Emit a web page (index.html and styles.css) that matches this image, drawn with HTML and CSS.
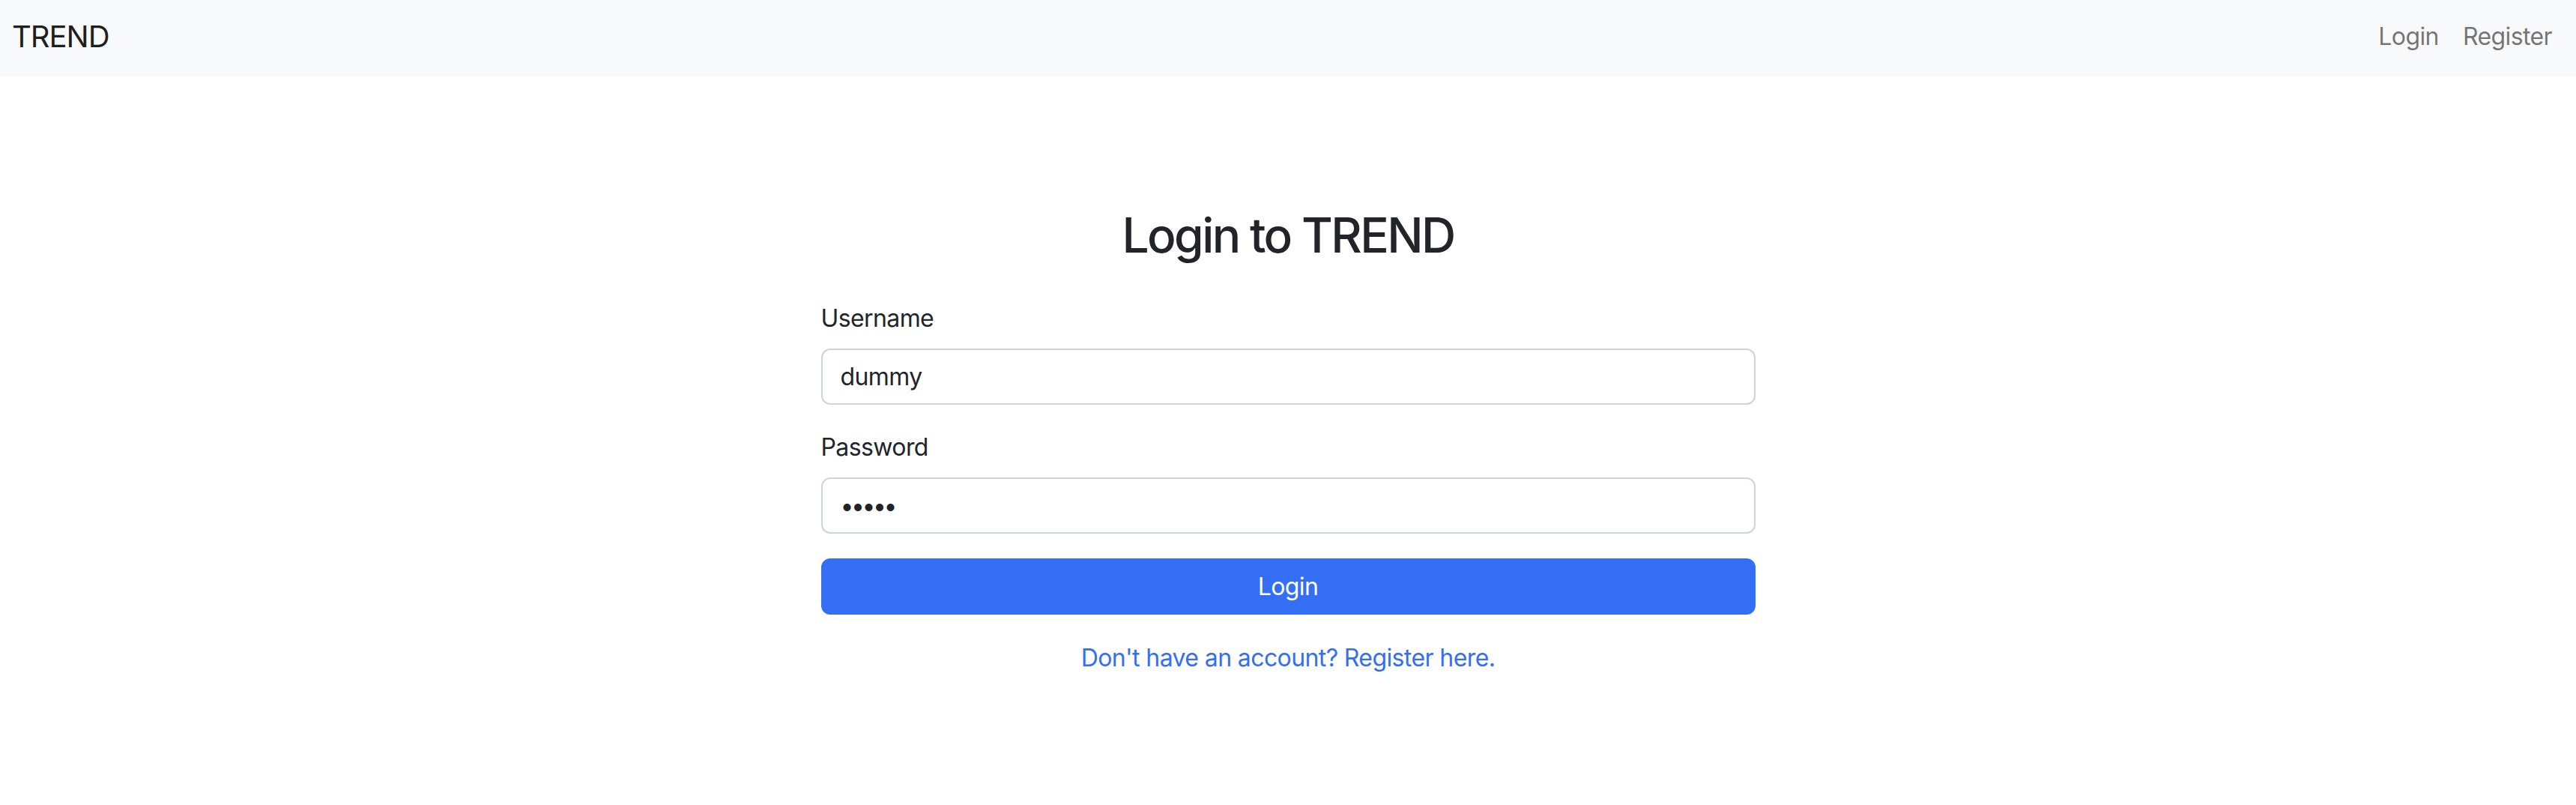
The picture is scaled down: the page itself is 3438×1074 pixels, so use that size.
FILE: index.html
```html
<!DOCTYPE html>
<html lang="en">
<head>
<meta charset="utf-8">
<title>Login - TREND</title>
<link rel="stylesheet" href="styles.css">
</head>
<body>
<nav class="navbar">
  <a class="brand" href="#">TREND</a>
  <div class="nav-links">
    <a class="nav-link" href="#">Login</a>
    <a class="nav-link" href="#">Register</a>
  </div>
</nav>
<main class="container">
  <h2 class="title">Login to TREND</h2>
  <form class="login-form">
    <div class="field">
      <label class="label" for="username">Username</label>
      <input class="input" id="username" type="text" value="dummy">
    </div>
    <div class="field">
      <label class="label" for="password">Password</label>
      <input class="input input-password" id="password" type="password" value="dummy">
    </div>
    <button class="btn-primary" type="button">Login</button>
  </form>
  <p class="alt"><a class="alt-link" href="#">Don't have an account? Register here.</a></p>
</main>
</body>
</html>
```
FILE: styles.css
```css
* { box-sizing: border-box; }
html, body { margin: 0; padding: 0; }
body {
  font-family: Inter, "Noto Sans", "Liberation Sans", sans-serif;
  font-size: 32px;
  line-height: 1.5;
  letter-spacing: -0.6px;
  color: #212529;
  background: #ffffff;
}
a { text-decoration: none; }

.navbar {
  height: 103px;
  background: #f8f9fa;
  display: flex;
  align-items: center;
  justify-content: space-between;
  padding: 0 16px 6px 16px;
}
.brand {
  font-size: 40px;
  line-height: 60px;
  letter-spacing: -1px;
  color: rgba(0, 0, 0, 0.9);
}
.nav-links {
  display: flex;
}
.nav-link {
  padding: 0 16px;
  color: rgba(0, 0, 0, 0.55);
  font-size: 32px;
  line-height: 48px;
}

.container {
  width: 1247px;
  margin: 0 auto;
  padding-top: 173px;
}
.title {
  margin: 0 0 48px 0;
  font-size: 64px;
  line-height: 1.2;
  font-weight: 500;
  letter-spacing: -2.6px;
  text-align: center;
}
.field { margin-bottom: 33px; }
.label {
  display: block;
  margin-bottom: 16px;
}
.input {
  display: block;
  width: 100%;
  height: 75px;
  padding: 0 24px;
  border: 2px solid #ced4da;
  border-radius: 12px;
  font-family: inherit;
  font-size: 32px;
  letter-spacing: -0.6px;
  color: #212529;
  background: #fff;
  outline: none;
}
.input-password {
  letter-spacing: -3.5px;
}
.btn-primary {
  display: block;
  width: 100%;
  height: 75px;
  border: none;
  border-radius: 12px;
  background: #336ef5;
  color: #fff;
  font-family: inherit;
  font-size: 32px;
  letter-spacing: -0.6px;
  cursor: pointer;
}
.alt {
  margin: 34px 0 0 0;
  text-align: center;
}
.alt-link { color: #336ef5; }
```
